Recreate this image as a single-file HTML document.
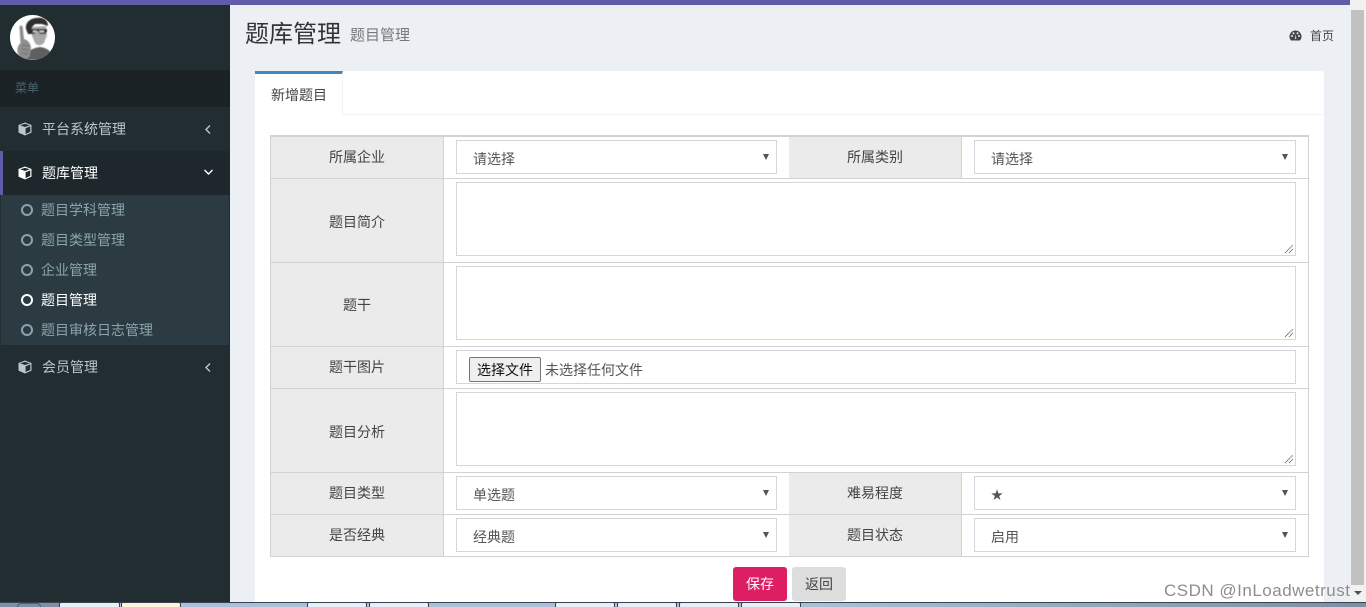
<!DOCTYPE html>
<html lang="zh"><head><meta charset="utf-8"><title>题目管理</title>
<style>
*{box-sizing:border-box}
html,body{margin:0;padding:0;width:1366px;height:607px;overflow:hidden;background:#ecf0f5;font-family:"Liberation Sans","Noto Sans CJK SC",sans-serif;font-size:14px;color:#333}
#w{position:relative;width:1366px;height:607px;overflow:hidden}
.a{position:absolute}
.t{position:absolute;white-space:nowrap;line-height:20px}
.lab{position:absolute;background:#ebebeb;text-align:center;color:#444;font-size:14px;border-right:1px solid #d2d2d2}
.hl{position:absolute;height:1px;left:270px;width:1039px;background:#d2d2d2;z-index:3}
.inp{position:absolute;height:34px;border:1px solid #d2d6de;background:#fff;padding-left:16px;padding-top:1px;line-height:34px;color:#555;font-size:14px}
.inp:after{content:"";position:absolute;right:7px;top:13px;border-left:3.5px solid transparent;border-right:3.5px solid transparent;border-top:6px solid #555}
.ta{position:absolute;left:456px;width:840px;height:74px;border:1px solid #d2d6de;background:#fff}
.ta svg{position:absolute;right:1px;bottom:1px}
.m{position:absolute;left:42px;font-size:14px;line-height:20px;color:#b8c7ce;white-space:nowrap}
.s{position:absolute;left:41px;font-size:14px;line-height:20px;color:#8aa4af;white-space:nowrap}
.c{position:absolute;left:21px;width:12px;height:12px;border:2px solid #8aa4af;border-radius:50%}
.tb{position:absolute;top:602px;height:5px;background:#e9eff6;border:1px solid #39424f;border-bottom:0;border-radius:2px 2px 0 0}
</style></head><body><div id="w">

<div class="a" style="left:0;top:0;width:1350px;height:5px;background:#605ca8;z-index:5"></div>

<!-- sidebar -->
<div class="a" style="left:0;top:0;width:230px;height:602px;background:#222d32"></div>
<svg class="a" style="left:10px;top:15px" width="45" height="45" viewBox="0 0 45 45">
<defs><clipPath id="cp"><circle cx="22.5" cy="22.5" r="22.5"/></clipPath><filter id="bl"><feGaussianBlur stdDeviation=".5"/></filter></defs>
<g clip-path="url(#cp)"><rect width="45" height="45" fill="#fff"/>
<g filter="url(#bl)">
<path d="M12 45C15 37 22 33 30 32C37 33 42 36 44 45Z" fill="#5f5f5f"/>
<path d="M21 12L36 11L37 20L34 28C31 31 27 31 25 28L22 21Z" fill="#a8a8a8"/>
<path d="M16 14C15 7 21 3 27 3C33 2 38 5 38 11L32 9L25 9L22 12L21 19L18 19Z" fill="#2e2e2e"/>
<path d="M20 14H37V16.500L35 19H30L28 16H26L25 19H21Z" fill="#333"/>
<path d="M23 15.500H26.500V17.500H23ZM29.500 15.500H34V17.500H29.500Z" fill="#c8c8c8"/>
<path d="M10.500 28L9.500 12C9.500 10 12.500 10 12.700 12L14 24C17 25 20 27 21 32L20 41C17 45 13 45 10 43C7 38 6 32 10.500 28Z" fill="#8e8e8e"/>
<path d="M12 30L19 31M11 34L19 35M12 38L18 39" stroke="#666" stroke-width=".8" fill="none"/>
</g></g></svg>
<div class="a" style="left:0;top:70px;width:230px;height:37px;background:#1a2226"></div>
<div class="t" style="left:15px;top:78px;font-size:12px;color:#4b646f">菜单</div>

<svg class="a" style="left:18px;top:122px" width="14" height="14" viewBox="0 0 14 14"><path d="M7 .5L13.500 3V10.600L7 13.500L.5 10.600V3Z" fill="#b8c7ce"/><path d="M2.200 3.300L7 1.900L11.800 3.300L7 5ZM7.600 6.200L12.300 4.400V9.900L7.600 12Z" fill="#222d32"/></svg>
<div class="m" style="top:119px">平台系统管理</div>
<svg class="a" style="left:204px;top:124px" width="8" height="11" viewBox="0 0 8 11"><path d="M6 1.500L2 5.500L6 9.500" fill="none" stroke="#b8c7ce" stroke-width="1.400"/></svg>

<div class="a" style="left:0;top:151px;width:230px;height:44px;background:#1e282c;border-left:3px solid #605ca8"></div>
<svg class="a" style="left:18px;top:166px" width="14" height="14" viewBox="0 0 14 14"><path d="M7 .5L13.500 3V10.600L7 13.500L.5 10.600V3Z" fill="#fff"/><path d="M2.200 3.300L7 1.900L11.800 3.300L7 5ZM7.600 6.200L12.300 4.400V9.900L7.600 12Z" fill="#1e282c"/></svg>
<div class="m" style="top:163px;color:#fff">题库管理</div>
<svg class="a" style="left:203px;top:168px" width="11" height="8" viewBox="0 0 11 8"><path d="M1.500 2L5.500 6L9.500 2" fill="none" stroke="#fff" stroke-width="1.400"/></svg>

<div class="a" style="left:1px;top:195px;width:228px;height:150px;background:#2c3b41"></div>
<div class="c" style="top:204px"></div><div class="s" style="top:200px">题目学科管理</div>
<div class="c" style="top:234px"></div><div class="s" style="top:230px">题目类型管理</div>
<div class="c" style="top:264px"></div><div class="s" style="top:260px">企业管理</div>
<div class="c" style="top:294px;border-color:#fff"></div><div class="s" style="top:290px;color:#fff">题目管理</div>
<div class="c" style="top:324px"></div><div class="s" style="top:320px">题目审核日志管理</div>

<svg class="a" style="left:18px;top:360px" width="14" height="14" viewBox="0 0 14 14"><path d="M7 .5L13.500 3V10.600L7 13.500L.5 10.600V3Z" fill="#b8c7ce"/><path d="M2.200 3.300L7 1.900L11.800 3.300L7 5ZM7.600 6.200L12.300 4.400V9.900L7.600 12Z" fill="#222d32"/></svg>
<div class="m" style="top:357px">会员管理</div>
<svg class="a" style="left:204px;top:362px" width="8" height="11" viewBox="0 0 8 11"><path d="M6 1.500L2 5.500L6 9.500" fill="none" stroke="#b8c7ce" stroke-width="1.400"/></svg>

<!-- header -->
<div class="t" style="left:245px;top:20px;font-size:24px;line-height:30px;color:#333">题库管理</div>
<div class="t" style="left:350px;top:27px;font-size:15px;line-height:18px;color:#777">题目管理</div>
<svg class="a" style="left:1289px;top:30px" width="13" height="11" viewBox="0 0 13 11"><path d="M6.500 .5A6 6 0 0 0 1.300 9.500L2 10.500H11L11.700 9.500A6 6 0 0 0 6.500 .5Z" fill="#444"/><circle cx="3" cy="6" r="1" fill="#ecf0f5"/><circle cx="4.500" cy="3.200" r="1" fill="#ecf0f5"/><circle cx="10" cy="6" r="1" fill="#ecf0f5"/><circle cx="8.500" cy="3.200" r="1" fill="#ecf0f5"/><path d="M6 9L6.800 4L7.300 9Z" fill="#ecf0f5"/></svg>
<div class="t" style="left:1310px;top:26px;font-size:12px;color:#444">首页</div>

<!-- box -->
<div class="a" style="left:255px;top:71px;width:1069px;height:531px;background:#fff;border-radius:3px 3px 0 0"></div>
<div class="a" style="left:255px;top:114px;width:1069px;height:1px;background:#f4f4f4"></div>
<div class="a" style="left:255px;top:71px;width:88px;height:44px;background:#fff;border-top:3px solid #3c8dbc;border-right:1px solid #f4f4f4"></div>
<div class="t" style="left:271px;top:85px;font-size:14px;line-height:21px;color:#444">新增题目</div>

<!-- table -->
<div class="a" style="left:270px;top:135px;width:1039px;height:422px;border:1px solid #d2d2d2;border-top:2px solid #d2d2d2"></div>
<div class="hl" style="top:178px"></div><div class="hl" style="top:262px"></div><div class="hl" style="top:346px"></div>
<div class="hl" style="top:388px"></div><div class="hl" style="top:472px"></div><div class="hl" style="top:514px"></div>

<div class="lab" style="left:271px;top:137px;width:173px;height:41px;line-height:41px">所属企业</div>
<div class="lab" style="left:789px;top:137px;width:173px;height:41px;line-height:41px">所属类别</div>
<div class="lab" style="left:271px;top:179px;width:173px;height:83px;line-height:83px;padding-top:2px">题目简介</div>
<div class="lab" style="left:271px;top:263px;width:173px;height:83px;line-height:83px;padding-top:1px">题干</div>
<div class="lab" style="left:271px;top:347px;width:173px;height:41px;line-height:41px">题干图片</div>
<div class="lab" style="left:271px;top:389px;width:173px;height:83px;line-height:83px;padding-top:2px">题目分析</div>
<div class="lab" style="left:271px;top:473px;width:173px;height:41px;line-height:41px">题目类型</div>
<div class="lab" style="left:789px;top:473px;width:173px;height:41px;line-height:41px">难易程度</div>
<div class="lab" style="left:271px;top:515px;width:173px;height:41px;line-height:41px">是否经典</div>
<div class="lab" style="left:789px;top:515px;width:173px;height:41px;line-height:41px">题目状态</div>

<div class="inp" style="left:456px;top:140px;width:321px">请选择</div>
<div class="inp" style="left:974px;top:140px;width:322px">请选择</div>
<div class="ta" style="top:182px"><svg width="10" height="10" viewBox="0 0 10 10"><path d="M1 9L9 1M5 9L9 5" stroke="#555" stroke-width="1" stroke-dasharray="1 .6"/></svg></div>
<div class="ta" style="top:266px"><svg width="10" height="10" viewBox="0 0 10 10"><path d="M1 9L9 1M5 9L9 5" stroke="#555" stroke-width="1" stroke-dasharray="1 .6"/></svg></div>
<div class="a" style="left:456px;top:350px;width:840px;height:34px;border:1px solid #d2d6de;background:#fff"></div>
<div class="a" style="left:469px;top:357px;width:72px;height:25px;background:#efefef;border:1px solid #767676;border-radius:2px;text-align:center;line-height:24px;font-size:14px;color:#111">选择文件</div>
<div class="t" style="left:545px;top:360px;font-size:14px;color:#555">未选择任何文件</div>
<div class="ta" style="top:392px"><svg width="10" height="10" viewBox="0 0 10 10"><path d="M1 9L9 1M5 9L9 5" stroke="#555" stroke-width="1" stroke-dasharray="1 .6"/></svg></div>
<div class="inp" style="left:456px;top:476px;width:321px">单选题</div>
<div class="inp" style="left:974px;top:476px;width:322px"><span style="font-size:12px;position:relative;top:-1px">★</span></div>
<div class="inp" style="left:456px;top:518px;width:321px">经典题</div>
<div class="inp" style="left:974px;top:518px;width:322px">启用</div>

<div class="a" style="left:733px;top:567px;width:54px;height:34px;background:#dd1e63;border-radius:3px;color:#fff;text-align:center;line-height:34px;font-size:14px">保存</div>
<div class="a" style="left:792px;top:567px;width:54px;height:34px;background:#ddd;border-radius:3px;color:#444;text-align:center;line-height:34px;font-size:14px">返回</div>

<div class="t" style="left:1164px;top:581px;font-size:17px;color:#8d8d8d;letter-spacing:.5px;z-index:6">CSDN @InLoadwetrust</div>

<!-- scrollbar -->
<div class="a" style="left:1350px;top:0;width:16px;height:602px;background:#f1f1f1"></div>
<div class="a" style="left:1351px;top:10px;width:13px;height:575px;background:#c1c1c1"></div>
<div class="a" style="left:1354px;top:591px;border-left:4px solid transparent;border-right:4px solid transparent;border-top:4px solid #505050;z-index:6"></div>

<!-- taskbar -->
<div class="a" style="left:0;top:602px;width:1366px;height:5px;background:linear-gradient(90deg,#a9c0d8,#a9c0d8 60%,#7d8ea5);border-top:1px solid #39424f"></div>
<div class="a" style="left:0;top:602px;width:59px;height:5px;background:#7f8fa3;border-top:1px solid #39424f"></div>
<div class="a" style="left:17px;top:603px;width:24px;height:4px;border:1px solid #2c6a94;border-bottom:0;border-radius:12px 12px 0 0"></div>
<div class="tb" style="left:59px;width:61px"></div>
<div class="tb" style="left:121px;width:60px;background:#fdf2dd"></div>
<div class="tb" style="left:307px;width:60px"></div>
<div class="tb" style="left:369px;width:60px"></div>
<div class="tb" style="left:555px;width:60px"></div>
<div class="tb" style="left:617px;width:60px"></div>
<div class="tb" style="left:679px;width:60px"></div>
<div class="tb" style="left:741px;width:60px"></div>
</div></body></html>
